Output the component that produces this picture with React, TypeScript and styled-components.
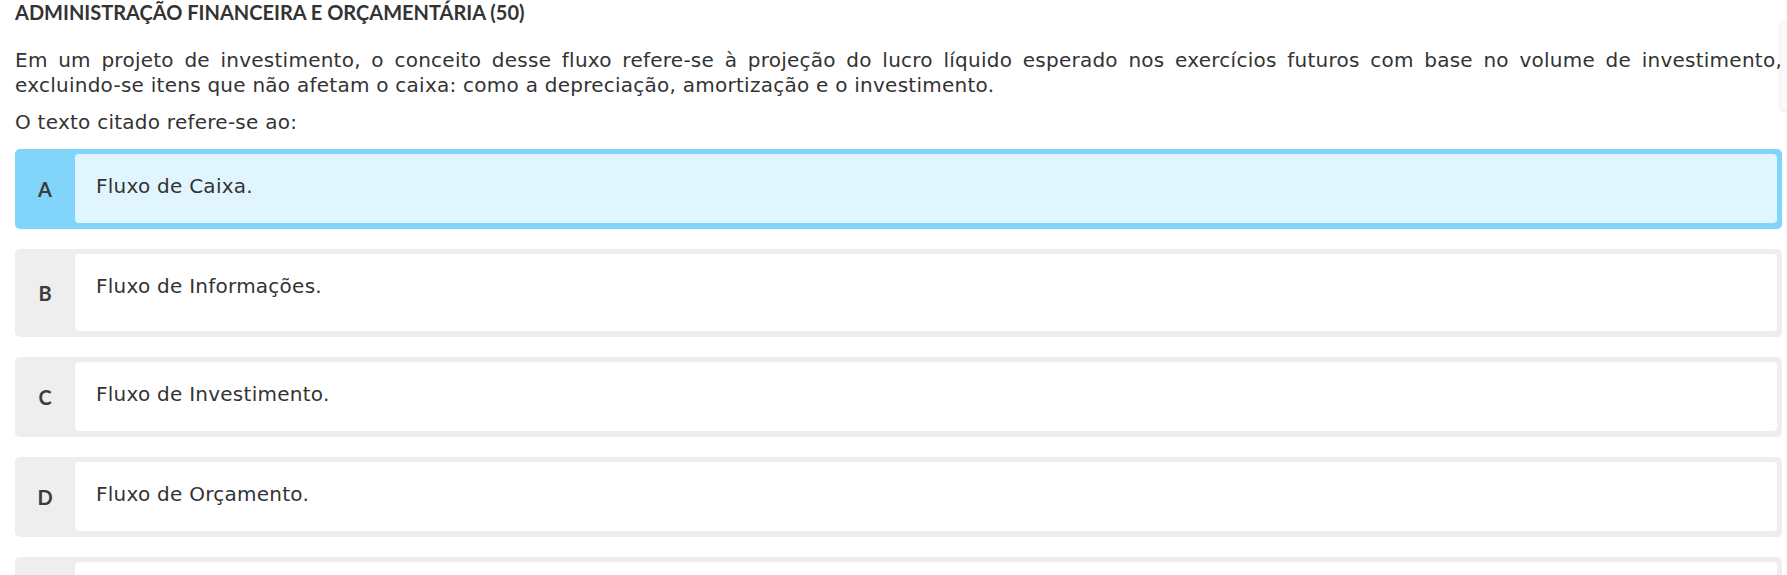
import React, { FC } from "react";
import styled, { createGlobalStyle } from "styled-components";

interface Choice {
  letter: string;
  text: string;
  tall?: boolean;
}

const choices: Choice[] = [
  { letter: "A", text: "Fluxo de Caixa." },
  { letter: "B", text: "Fluxo de Informações.", tall: true },
  { letter: "C", text: "Fluxo de Investimento." },
  { letter: "D", text: "Fluxo de Orçamento." },
  { letter: "E", text: "Fluxo de Resultado." },
];

const GlobalStyle = createGlobalStyle`
  html, body {
    margin: 0;
    padding: 0;
    background: #ffffff;
    overflow: hidden;
  }
  body {
    font-family: "DejaVu Sans", Verdana, sans-serif;
    color: #333333;
  }
`;

const Page = styled.div`
  padding: 0 5px 0 15px;
`;

const Title = styled.h2`
  margin: 0;
  font-family: Lato, "Open Sans", sans-serif;
  font-weight: 700;
  font-size: 20px;
  line-height: 24px;
  color: #333333;
`;

const Statement = styled.p<{ $top: number }>`
  margin: ${({ $top }) => $top}px 0 0;
  font-size: 20px;
  line-height: 25px;
  letter-spacing: 0.25px;
  text-align: justify;
  color: #333333;
`;

const ChoiceList = styled.div`
  margin-top: 14px;
  display: flex;
  flex-direction: column;
  gap: 20px;
`;

const ChoiceCard = styled.div<{ $selected: boolean }>`
  display: flex;
  align-items: stretch;
  padding: 5px 5px 6px 0;
  border-radius: 5px;
  background: ${({ $selected }) => ($selected ? "#81d4fa" : "#eeeeee")};
`;

const Letter = styled.div`
  width: 60px;
  flex: none;
  display: flex;
  align-items: center;
  justify-content: center;
  font-family: Lato, "Open Sans", sans-serif;
  font-weight: 700;
  font-size: 20px;
  color: #3c3c3c;
`;

const ChoiceBody = styled.div<{ $selected: boolean; $tall?: boolean }>`
  flex: 1;
  border-radius: 4px;
  background: ${({ $selected }) => ($selected ? "#e1f5fe" : "#ffffff")};
  padding: 20px 20px ${({ $tall }) => ($tall ? 32 : 24)}px 21px;
  font-size: 20px;
  line-height: 25px;
  letter-spacing: 0.25px;
  color: #333333;
`;

const SidePanel = styled.div`
  position: fixed;
  top: 20px;
  right: -20px;
  width: 27px;
  height: 90px;
  border-radius: 4px;
  background: #f8f9fa;
  box-shadow: 0 1px 3px rgba(0, 0, 0, 0.12);
`;

const App: FC = () => (
  <Page>
    <GlobalStyle />
    <Title>ADMINISTRAÇÃO FINANCEIRA E ORÇAMENTÁRIA (50)</Title>
    <Statement $top={24}>
      Em um projeto de investimento, o conceito desse fluxo refere-se à
      projeção do lucro líquido esperado nos exercícios futuros com base no
      volume de investimento, excluindo-se itens que não afetam o caixa: como
      a depreciação, amortização e o investimento.
    </Statement>
    <Statement $top={12}>O texto citado refere-se ao:</Statement>
    <ChoiceList>
      {choices.map((choice, i) => (
        <ChoiceCard key={choice.letter} $selected={i === 0}>
          <Letter>{choice.letter}</Letter>
          <ChoiceBody $selected={i === 0} $tall={choice.tall}>
            {choice.text}
          </ChoiceBody>
        </ChoiceCard>
      ))}
    </ChoiceList>
    <SidePanel />
  </Page>
);

export default App;
